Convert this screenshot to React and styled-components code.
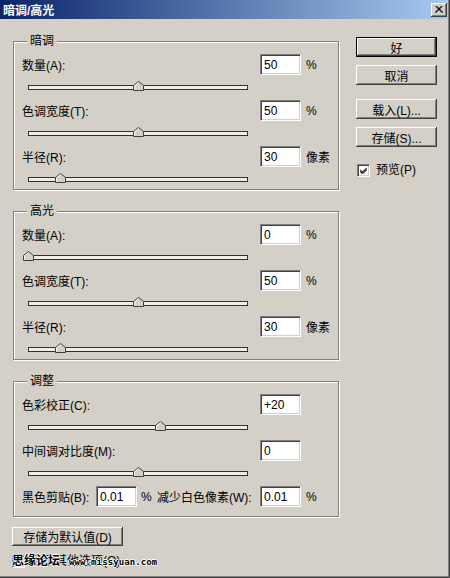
import React from 'react';
import styled, { createGlobalStyle } from 'styled-components';

const GlobalStyle = createGlobalStyle`
  html, body {
    margin: 0;
    padding: 0;
    background: #d4d0c8;
  }
  body {
    font-family: "Liberation Sans", "Noto Sans CJK SC", sans-serif;
    font-size: 12px;
    color: #000;
  }
`;

const Window = styled.div`
  position: relative;
  width: 450px;
  height: 578px;
  box-sizing: border-box;
  background: #d4d0c8;
  border-right: 1px solid #404040;
  border-bottom: 1px solid #404040;
  box-shadow: inset -1px -1px 0 #808080;
  overflow: hidden;
`;

const TitleBar = styled.div`
  display: flex;
  align-items: center;
  justify-content: space-between;
  height: 19px;
  margin-right: 1px;
  padding: 0 1px 0 3px;
  background: linear-gradient(to right, #0a246a, #a6caf0);
  color: #fff;
  font-weight: bold;
  font-size: 12px;
`;

const CloseBox = styled.div`
  display: flex;
  align-items: center;
  justify-content: center;
  width: 16px;
  height: 14px;
  box-sizing: border-box;
  background: #d4d0c8;
  box-shadow: inset -1px -1px 0 #404040, inset 1px 1px 0 #fff, inset -2px -2px 0 #808080;
`;

const Body = styled.div`
  display: grid;
  grid-template-columns: 326px 81px;
  column-gap: 17px;
  padding-left: 13px;
`;

const LeftColumn = styled.div`
  padding-top: 22px;
`;

const RightColumn = styled.div`
  display: flex;
  flex-direction: column;
  padding-top: 18px;
`;

const Group = styled.div`
  border: 1px solid #808080;
  box-shadow: inset 1px 1px 0 #fff, 1px 1px 0 #fff;
  padding: 0 8px 7px 8px;

  & + & {
    margin-top: 21px;
  }
`;

const Legend = styled.div`
  width: fit-content;
  height: 16px;
  line-height: 16px;
  margin: -9px 0 -5px 5px;
  padding: 0 3px;
  background: #d4d0c8;
`;

const InputRow = styled.div`
  display: grid;
  grid-template-columns: 238px 41px auto;
  align-items: center;
  height: 21px;
  margin-top: 10px;
`;

const ClipRow = styled.div`
  display: grid;
  grid-template-columns: 74px 41px 20px 103px 41px auto;
  align-items: center;
  height: 21px;
  margin: 10px 0 2px 0;
`;

const Label = styled.span`
  white-space: nowrap;
`;

const Unit = styled.span`
  padding-left: ${p => p.$pad || 5}px;
  white-space: nowrap;
`;

const Field = styled.div`
  width: 41px;
  height: 21px;
  box-sizing: border-box;
  padding: 3px 0 0 3px;
  background: #fff;
  border-top: 1px solid #808080;
  border-left: 1px solid #808080;
  border-right: 1px solid #fff;
  border-bottom: 1px solid #fff;
  box-shadow: inset 1px 1px 0 #404040, inset -1px -1px 0 #d4d0c8;
  font-size: 12px;
  line-height: 14px;
`;

const Track = styled.div`
  position: relative;
  width: 220px;
  height: 5px;
  box-sizing: border-box;
  margin: 10px 0 0 6px;
  border: 1px solid #303030;
  background: #eeeeea;
`;

const Thumb = styled.svg`
  position: absolute;
  top: -5px;
  width: 11px;
  height: 10px;
`;

const Button = styled.button`
  display: block;
  width: ${p => p.$w || 81}px;
  height: ${p => p.$h || 20}px;
  box-sizing: border-box;
  margin: 0;
  padding: 0;
  background: #d4d0c8;
  border: ${p => (p.$default ? '1px solid #000' : 'none')};
  box-shadow: inset -1px -1px 0 #404040, inset 1px 1px 0 #fff, inset -2px -2px 0 #808080;
  font-family: inherit;
  font-size: 12px;
  color: #000;
  text-align: center;
`;

const ButtonSlot = styled.div`
  margin-top: ${p => p.$gap}px;
`;

const CheckRow = styled.label`
  display: flex;
  align-items: center;
  gap: 6px;
  height: 14px;
  line-height: 14px;
  margin: ${p => p.$margin};
`;

const Box = styled.span`
  display: flex;
  align-items: center;
  justify-content: center;
  width: 13px;
  height: 13px;
  box-sizing: border-box;
  background: #fff;
  border-top: 1px solid #808080;
  border-left: 1px solid #808080;
  border-right: 1px solid #fff;
  border-bottom: 1px solid #fff;
  box-shadow: inset 1px 1px 0 #404040, inset -1px -1px 0 #d4d0c8;
`;

const Watermark = styled.div`
  position: absolute;
  left: 12px;
  top: 552px;
  display: flex;
  align-items: flex-end;
  gap: 9px;
  pointer-events: none;
`;

const MarkCn = styled.span`
  font-family: "Noto Sans CJK SC", sans-serif;
  font-size: 12px;
  font-weight: bold;
  line-height: 16px;
  color: #000;
  text-shadow: 1px 0 0 #fff, -1px 0 0 #fff, 0 1px 0 #fff, 0 -1px 0 #fff;
`;

const MarkUrl = styled.span`
  font-family: "DejaVu Sans Mono", monospace;
  font-size: 9px;
  font-weight: bold;
  line-height: 12px;
  letter-spacing: 0.1px;
  color: #000;
  text-shadow: 1px 0 0 #fff, -1px 0 0 #fff, 0 1px 0 #fff, 0 -1px 0 #fff;
`;

const Slider = ({ value }) => (
  <Track>
    <Thumb viewBox="0 0 11 10" style={{ left: `${value * 220 - 6.5}px` }}>
      <polygon points="5.5,0.5 10.5,4.5 10.5,9.5 0.5,9.5 0.5,4.5" fill="#d4d0c8" stroke="#404040" />
      <polyline points="1.5,8.5 1.5,5 5.5,1.8" fill="none" stroke="#fff" />
    </Thumb>
  </Track>
);

const Setting = ({ label, value, unit, pos }) => (
  <>
    <InputRow>
      <Label>{label}</Label>
      <Field>{value}</Field>
      {unit ? <Unit>{unit}</Unit> : <span />}
    </InputRow>
    <Slider value={pos} />
  </>
);

const Check = ({ checked }) => (
  <Box>
    {checked && (
      <svg width="7" height="7" viewBox="0 0 7 7">
        <path d="M0 2.5 L2.5 5 L7 0.5 M0 3.5 L2.5 6 L7 1.5 M0 4.5 L2.5 7 L7 2.5" stroke="#000" strokeWidth="1" fill="none" />
      </svg>
    )}
  </Box>
);

export default function App() {
  return (
    <Window>
      <GlobalStyle />
      <TitleBar>
        <span>暗调/高光</span>
        <CloseBox>
          <svg width="8" height="7" viewBox="0 0 8 7">
            <path d="M0.5 0 L7.5 7 M1.5 0 L8 6.5 M7.5 0 L0.5 7 M6.5 0 L0 6.5" stroke="#000" strokeWidth="1" />
          </svg>
        </CloseBox>
      </TitleBar>
      <Body>
        <LeftColumn>
          <Group>
            <Legend>暗调</Legend>
            <Setting label="数量(A):" value="50" unit="%" pos={0.5} />
            <Setting label="色调宽度(T):" value="50" unit="%" pos={0.5} />
            <Setting label="半径(R):" value="30" unit="像素" pos={0.148} />
          </Group>
          <Group>
            <Legend>高光</Legend>
            <Setting label="数量(A):" value="0" unit="%" pos={0} />
            <Setting label="色调宽度(T):" value="50" unit="%" pos={0.5} />
            <Setting label="半径(R):" value="30" unit="像素" pos={0.148} />
          </Group>
          <Group>
            <Legend>调整</Legend>
            <Setting label="色彩校正(C):" value="+20" pos={0.602} />
            <Setting label="中间调对比度(M):" value="0" pos={0.5} />
            <ClipRow>
              <Label>黑色剪贴(B):</Label>
              <Field>0.01</Field>
              <Unit $pad={4}>%</Unit>
              <Label>减少白色像素(W):</Label>
              <Field>0.01</Field>
              <Unit>%</Unit>
            </ClipRow>
          </Group>
          <ButtonSlot $gap={10} style={{ marginLeft: '-1px' }}>
            <Button $w={111} $h={19}>存储为默认值(D)</Button>
          </ButtonSlot>
          <CheckRow $margin="8px 0 0 -1px">
            <Check />
            <span>显示其他选项(O)</span>
          </CheckRow>
        </LeftColumn>
        <RightColumn>
          <Button $default>好</Button>
          <ButtonSlot $gap={8}><Button>取消</Button></ButtonSlot>
          <ButtonSlot $gap={14}><Button>载入(L)...</Button></ButtonSlot>
          <ButtonSlot $gap={8}><Button>存储(S)...</Button></ButtonSlot>
          <CheckRow $margin="16px 0 0 1px">
            <Check checked />
            <span>预览(P)</span>
          </CheckRow>
        </RightColumn>
      </Body>
      <Watermark>
        <MarkCn>思缘论坛</MarkCn>
        <MarkUrl>www.missyuan.com</MarkUrl>
      </Watermark>
    </Window>
  );
}
